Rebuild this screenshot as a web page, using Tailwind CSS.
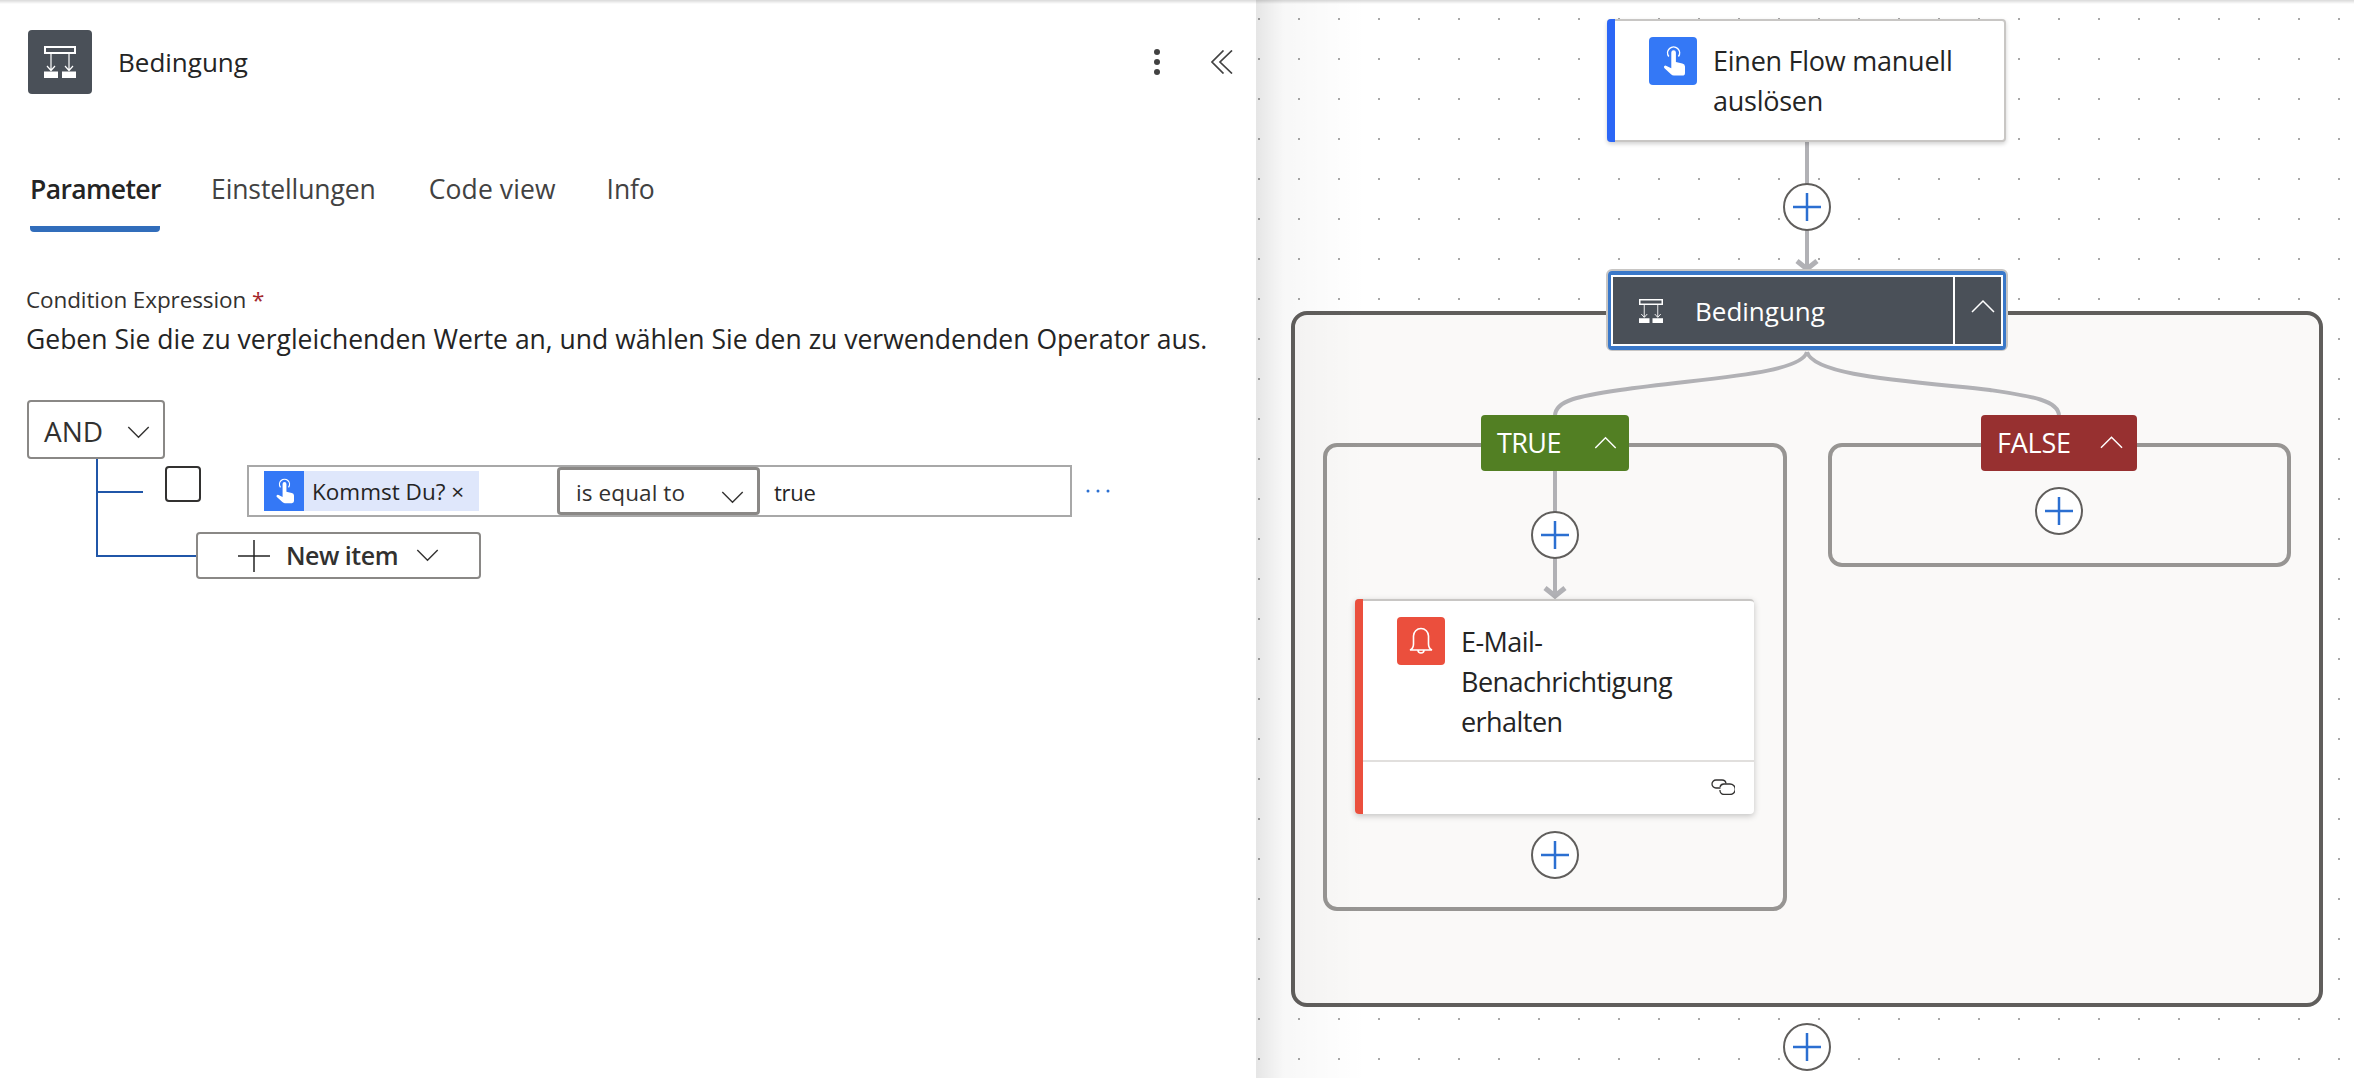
<!DOCTYPE html>
<html lang="de">
<head>
  <meta charset="UTF-8" />
  <title>Bedingung</title>
  <script src="https://cdn.jsdelivr.net/npm/@tailwindcss/browser@4"></script>
</head>
<body class="w-[2354px] h-[1078px] overflow-hidden bg-white text-[#242424] font-['Open_Sans',sans-serif]">
  <svg class="hidden">
    <defs>
      <symbol id="cond" viewBox="0 0 32 32">
        <rect x="1" y="1" width="30" height="6" fill="none" stroke="currentColor" stroke-width="2"/>
        <path d="M7 7v17M25 7v17M3 20l4 4.500 4-4.500M21 20l4 4.500 4-4.500" fill="none" stroke="currentColor" stroke-width="1.200"/>
        <path d="M0 25.500h14v6.500H0zM18 25.500h14v6.500H18z" fill="currentColor"/>
      </symbol>
      <symbol id="hand" viewBox="0 0 48 48">
        <path d="M19.800 19.500a6 6 0 1 1 9.600 0" fill="none" stroke="#fff" stroke-width="1.500"/>
        <path d="M22.300 15.500a2.300 2.300 0 0 1 4.600 0V25l6.400 1.400a3.200 3.200 0 0 1 2.700 3.100V36a2.600 2.600 0 0 1-2.600 2.600H25a4 4 0 0 1-3-1.300l-6.500-6.100a1.500 1.500 0 0 1 2-2.300l4.800 2.300z" fill="#fff"/>
      </symbol>
      <symbol id="plus" viewBox="0 0 48 48">
        <circle cx="24" cy="24" r="23" fill="#fff" stroke="#605e5c" stroke-width="2"/>
        <path d="M10 24h28" stroke="#2b6fd1" stroke-width="2.500"/>
        <path d="M24 10v28" stroke="#2b6fd1" stroke-width="2.500"/>
      </symbol>
    </defs>
  </svg>

  <div class="flex h-full">
    <!-- Left panel -->
    <aside class="w-[1256px] shrink-0 h-full pl-[26px] pt-[30px]">
      <header class="flex items-center h-[64px]">
        <div class="w-[64px] h-[64px] ml-[2px] rounded bg-[#4a5058] text-white flex items-center justify-center">
          <svg class="w-[32px] h-[32px]"><use href="#cond"/></svg>
        </div>
        <h1 class="ml-[26px] text-[26px]">Bedingung</h1>
        <div class="ml-auto flex items-center pr-[23px]">
          <svg class="w-[8px] h-[28px]" viewBox="0 0 8 28" fill="#424242"><circle cx="4" cy="4" r="3"/><circle cx="4" cy="14" r="3"/><circle cx="4" cy="24" r="3"/></svg>
          <svg class="w-[22px] h-[24px] ml-[50px]" viewBox="0 0 22 24" fill="none" stroke="#424242" stroke-width="1.700"><path d="M12.500.5 1 12l11.500 11.500M21 .5 9 12l12 11.500"/></svg>
        </div>
      </header>

      <nav class="flex mt-[66px] ml-[4px] pt-[10px] text-[26.5px] tracking-[-0.1px] h-[72px] text-[#424242]">
        <a class="w-[130px] -mt-[10px] pt-[10px] h-[72px] border-b-[6px] border-[#316dbb] rounded-b font-semibold tracking-[-0.6px] text-[#242424] whitespace-nowrap">Parameter</a>
        <a class="ml-[51px]">Einstellungen</a>
        <a class="ml-[53px] tracking-[0.1px]">Code view</a>
        <a class="ml-[51px]">Info</a>
      </nav>

      <div class="mt-[52px] text-[22.5px] tracking-[-0.1px] leading-[32px] text-[#323130]">Condition Expression <span class="text-[#a4262c]">*</span></div>
      <p class="mt-[5px] text-[26.5px] leading-[36px] whitespace-nowrap">Geben Sie die zu vergleichenden Werte an, und wählen Sie den zu verwendenden Operator aus.</p>

      <!-- Condition editor -->
      <div class="relative mt-[43px] ml-[1px] h-[180px]">
        <button class="flex items-center w-[138px] h-[59px] border-2 border-[#8a8886] rounded pl-[15px] pt-[2px] text-[28px] text-[#323130]">
          AND
          <svg class="w-[23px] h-[13px] ml-[24px] mt-[4px]" viewBox="0 0 24 14" fill="none" stroke="#323130" stroke-width="1.500"><path d="m1 1 11 11L23 1"/></svg>
        </button>
        <!-- tree lines -->
        <div class="absolute left-[69px] top-[59px] w-[2px] h-[98px] bg-[#2056a8]"></div>
        <div class="absolute left-[69px] top-[91px] w-[47px] h-[2px] bg-[#2056a8]"></div>
        <div class="absolute left-[69px] top-[155px] w-[100px] h-[2px] bg-[#2056a8]"></div>

        <div class="flex items-start mt-[7px] ml-[138px]">
          <div class="w-[36px] h-[36px] border-2 border-[#323130] rounded"></div>
          <div class="flex ml-[46px] w-[825px] h-[52px] -mt-[1px] border-2 border-[#a8a8a8]">
            <div class="flex items-center w-[308px] shrink-0 pl-[15px]">
              <span class="flex items-center h-[40px] w-[215px] bg-[#dfe7fb] text-[22.5px] leading-none">
                <span class="w-[40px] h-[40px] bg-[#3478f6] shrink-0"><svg class="w-[40px] h-[40px]"><use href="#hand"/></svg></span>
                <span class="ml-[8px] pt-[3px] whitespace-nowrap">Kommst Du? ×</span>
              </span>
            </div>
            <div class="flex items-center shrink-0 w-[203px] h-[48px] border-[3px] border-[#8a8886] rounded pl-[16px] text-[22.5px] tracking-[0.1px] text-[#323130] pt-[4px]">
              is equal to
              <svg class="w-[23px] h-[13px] ml-[36px] mt-[8px]" viewBox="0 0 24 14" fill="none" stroke="#323130" stroke-width="1.500"><path d="m1 1 11 11L23 1"/></svg>
            </div>
            <div class="pl-[14px] pt-[3px] text-[22px] tracking-[-0.3px] leading-[44px]">true</div>
          </div>
          <svg class="w-[24px] h-[6px] ml-[14px] mt-[22px]" viewBox="0 0 24 6" fill="#2b6fd1"><circle cx="2" cy="3" r="1.500"/><circle cx="12" cy="3" r="1.500"/><circle cx="22" cy="3" r="1.500"/></svg>
        </div>

        <button class="absolute left-[169px] top-[132px] flex items-center w-[285px] h-[47px] border-2 border-[#8a8886] rounded bg-white pl-[40px] text-[25px] tracking-[-0.5px] font-semibold text-[#323130]">
          <svg class="w-[32px] h-[32px] shrink-0" viewBox="0 0 32 32" stroke="#242424" stroke-width="1.500"><path d="M0 16h32M16 0v32"/></svg>
          <span class="ml-[16px]">New item</span>
          <svg class="w-[23px] h-[13px] ml-[18px]" viewBox="0 0 24 14" fill="none" stroke="#323130" stroke-width="1.500"><path d="m1 1 11 11L23 1"/></svg>
        </button>
      </div>
    </aside>

    <!-- Flow canvas: free diagram, nodes sit at their own coordinates -->
    <main class="relative flex-1 h-full overflow-hidden">
      <svg class="absolute inset-0 w-full h-full">
        <defs>
          <pattern id="dots" x="2" y="18" width="40" height="40" patternUnits="userSpaceOnUse">
            <rect width="2" height="2" fill="#a8a8a8"/>
          </pattern>
        </defs>
        <rect width="100%" height="100%" fill="url(#dots)"/>
      </svg>

      <!-- outer condition group -->
      <div class="absolute left-[35px] top-[311px] w-[1032px] h-[696px] border-4 border-[#605e5c] rounded-[16px] bg-[#faf9f8]"></div>
      <!-- branch groups -->
      <div class="absolute left-[67px] top-[443px] w-[464px] h-[468px] border-4 border-[#979593] rounded-[14px]"></div>
      <div class="absolute left-[572px] top-[443px] w-[463px] h-[124px] border-4 border-[#979593] rounded-[14px]"></div>

      <!-- edges -->
      <svg class="absolute inset-0 w-full h-full" fill="none" stroke="#b1b1b5" stroke-width="4">
        <path d="M551 142V268"/>
        <path d="M541 261l10 8 10-8" stroke-width="5"/>
        <path d="M551 352C544 375 444 378 364 390 324 396 299 400 299 416"/>
        <path d="M551 352C558 375 640 380 734 390 774 396 803 400 803 416"/>
        <path d="M299 470V596"/>
        <path d="M289 588l10 8 10-8" stroke-width="5"/>
      </svg>

      <!-- trigger card -->
      <div class="absolute left-[351px] top-[19px] w-[399px] h-[123px] flex bg-white border-2 border-l-0 border-[#c8c6c4] rounded shadow-[0_2px_4px_rgba(0,0,0,0.18)]">
        <div class="w-[8px] -my-[2px] bg-[#2b66f6] rounded-l"></div>
        <div class="w-[48px] h-[48px] mt-[16px] ml-[34px] rounded bg-[#3478f6]"><svg class="w-[48px] h-[48px]"><use href="#hand"/></svg></div>
        <div class="ml-[16px] mt-[20px] text-[27px] leading-[40px] tracking-[-0.25px]">Einen Flow manuell<br>auslösen</div>
      </div>

      <!-- condition node -->
      <div class="absolute left-[350px] top-[269px] w-[402px] h-[82px] border-2 border-b border-[#c8c6c4] rounded-md">
        <div class="w-full h-full border-y-4 border-x-[3px] border-[#3a78c9] rounded bg-[#3a78c9]">
          <div class="flex h-full border-2 border-white bg-[#4a5058] text-white">
            <div class="flex items-center flex-1 pl-[26px] border-r-2 border-white">
              <svg class="w-[24px] h-[24px]"><use href="#cond"/></svg>
              <span class="ml-[32px] pt-[2px] text-[26px]">Bedingung</span>
            </div>
            <div class="w-[46px] flex items-center justify-center pl-[10px] pb-[9px]">
              <svg class="w-[24px] h-[14px]" viewBox="0 0 24 14" fill="none" stroke="#fff" stroke-width="1.500"><path d="m1 13 11-11 11 11"/></svg>
            </div>
          </div>
        </div>
      </div>

      <!-- branch labels -->
      <div class="absolute left-[225px] top-[415px] w-[148px] h-[56px] flex items-center pl-[16px] rounded bg-[#527f23] text-white text-[27px] tracking-[-0.6px]">
        TRUE
        <svg class="w-[23px] h-[13px] ml-[33px] -mt-[2px]" viewBox="0 0 24 14" fill="none" stroke="#fff" stroke-width="1.500"><path d="m1 13 11-11 11 11"/></svg>
      </div>
      <div class="absolute left-[725px] top-[415px] w-[156px] h-[56px] flex items-center pl-[16px] rounded bg-[#973030] text-white text-[27px] tracking-[-0.2px]">
        FALSE
        <svg class="w-[23px] h-[14px] ml-[29px] -mt-[2px]" viewBox="0 0 24 14" fill="none" stroke="#fff" stroke-width="1.500"><path d="m1 13 11-11 11 11"/></svg>
      </div>

      <!-- action card -->
      <div class="absolute left-[99px] top-[599px] w-[399px] h-[215px] flex bg-white border-t-2 border-[#c8c6c4] rounded shadow-[0_2px_6px_rgba(0,0,0,0.22)]">
        <div class="w-[8px] -mt-[2px] bg-[#eb4f3d] rounded-l"></div>
        <div class="flex-1 flex flex-col">
          <div class="flex h-[161px] border-b-2 border-[#e1dfdd]">
            <div class="w-[48px] h-[48px] mt-[16px] ml-[34px] rounded bg-[#eb4f3d]">
              <svg class="w-[48px] h-[48px]" viewBox="0 0 48 48" fill="none" stroke="#fff" stroke-width="1.600"><path d="M13 33c2.500-1 3.500-3 3.500-6v-8a7.500 7.500 0 0 1 15 0v8c0 3 1 5 3.500 6zM21 33a3 3 0 0 0 6 0"/></svg>
            </div>
            <div class="ml-[16px] mt-[21px] text-[27px] leading-[40px] tracking-[-0.55px]">E-Mail-<br>Benachrichtigung<br>erhalten</div>
          </div>
          <div class="flex justify-end pr-[19px] pt-[17px]">
            <svg class="w-[24px] h-[16px]" viewBox="0 0 24 16" fill="none" stroke="#323130" stroke-width="1.300"><path d="M9.500 9H5a4 4 0 0 1 0-8h6a4 4 0 0 1 4 3.500"/><path d="M9 8a4 4 0 0 1 4-3h6a4.500 4.500 0 0 1 0 10.500h-6A4 4 0 0 1 9 11"/></svg>
          </div>
        </div>
      </div>

      <!-- add buttons -->
      <svg class="absolute left-[527px] top-[183px] w-[48px] h-[48px]"><use href="#plus"/></svg>
      <svg class="absolute left-[275px] top-[511px] w-[48px] h-[48px]"><use href="#plus"/></svg>
      <svg class="absolute left-[779px] top-[487px] w-[48px] h-[48px]"><use href="#plus"/></svg>
      <svg class="absolute left-[275px] top-[831px] w-[48px] h-[48px]"><use href="#plus"/></svg>
      <svg class="absolute left-[527px] top-[1023px] w-[48px] h-[48px]"><use href="#plus"/></svg>

      <!-- panel shadow over the canvas -->
      <div class="absolute inset-y-0 left-0 w-[110px] bg-gradient-to-r from-black/10 via-black/3 via-25% to-transparent pointer-events-none"></div>
    </main>
  </div>
  <div class="fixed top-0 inset-x-0 h-[4px] bg-gradient-to-b from-black/15 to-transparent"></div>
</body>
</html>
